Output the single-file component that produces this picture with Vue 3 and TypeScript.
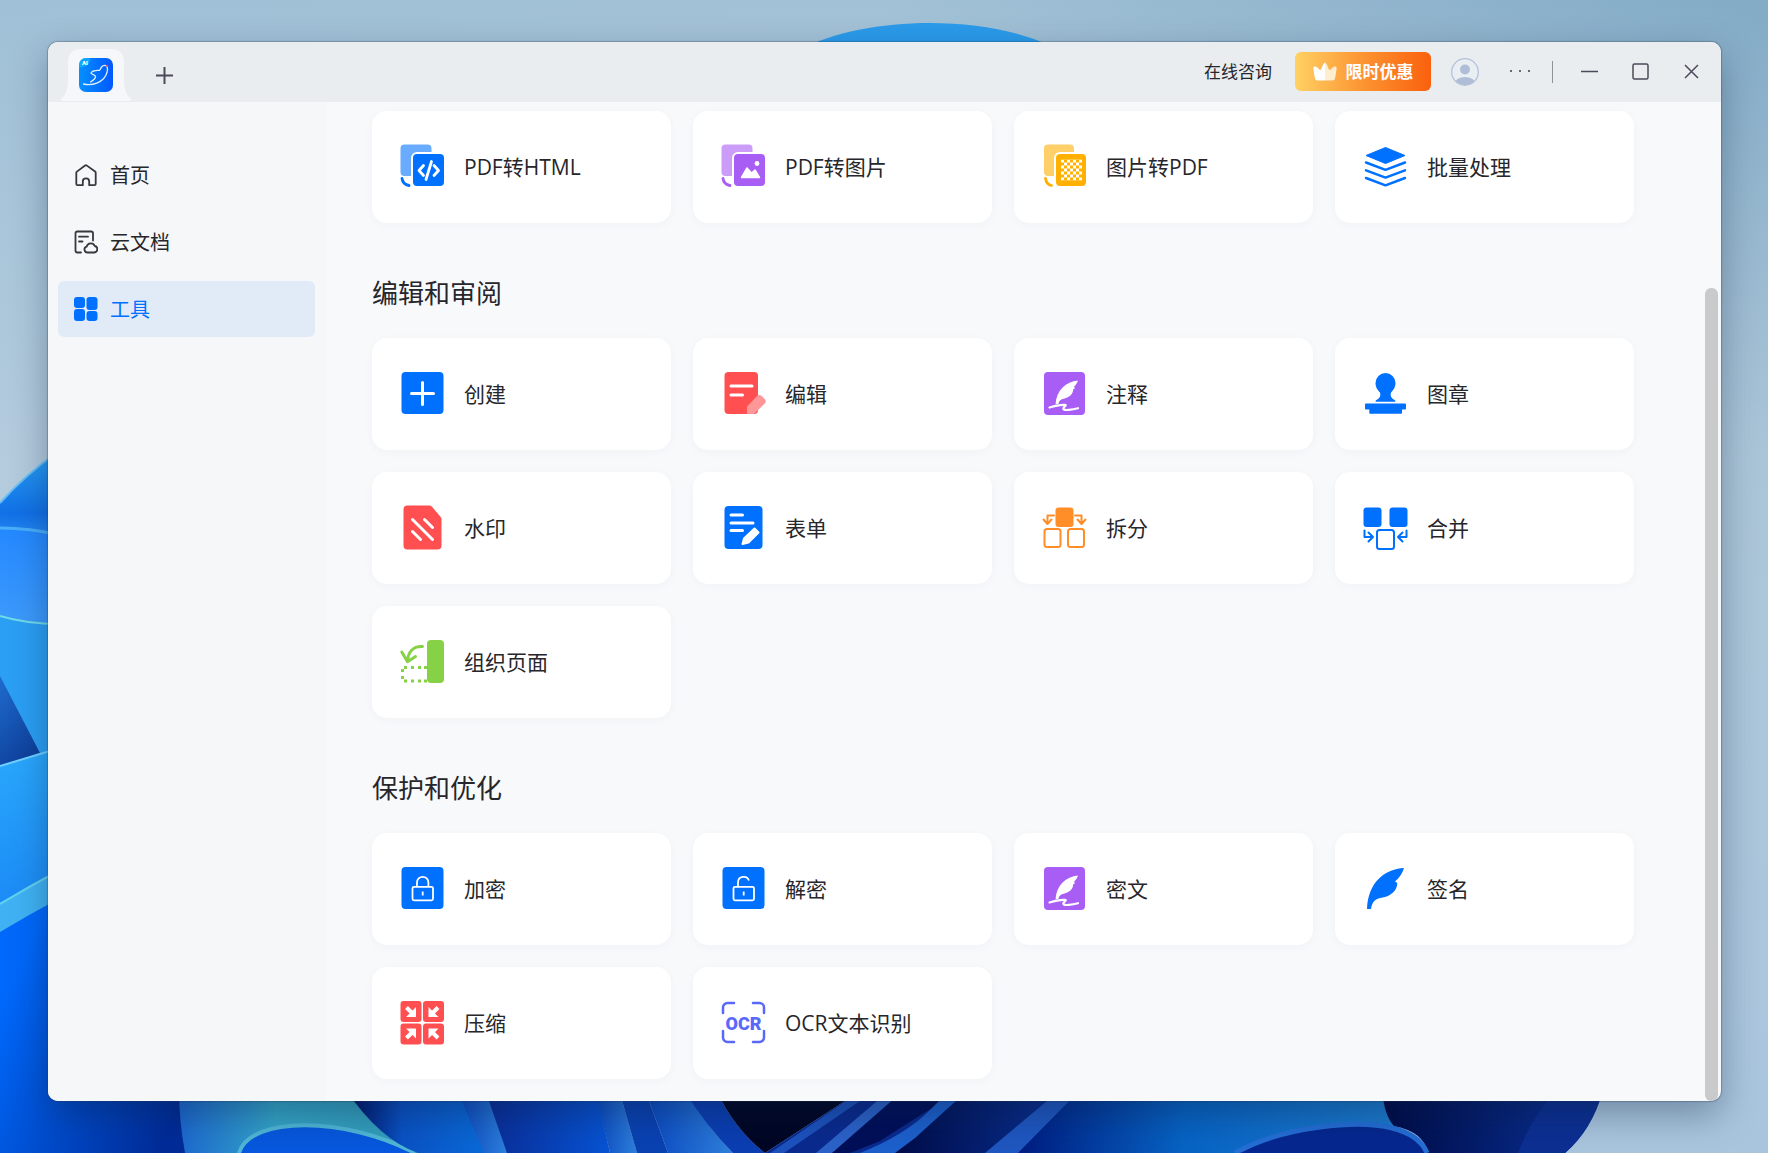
<script setup lang="ts">
import { ref } from 'vue'

interface Tool {
  label: string
  icon: string
}

interface Section {
  title?: string
  tools: Tool[]
}

const feather =
  '<rect x="2" y="0" width="41" height="43" rx="4" fill="#a85df5"/>' +
  '<path d="M36 8.500C24 9.500 14.500 18 13.500 32.500l2.800-.6c.8-3.200 2.700-4.700 5.500-5.200 6-1.200 9.400-5 9.400-9.400l1.800-1-1-1.500c2-2 3.400-4.200 4-6.300z" fill="#fff"/>' +
  '<path d="M7.500 35.500c5-1.600 11.500-3 15.500-2.600 2.500.4-1.800 2-1.700 3.700.2 2.600 9.700 1 14.700-.4" fill="none" stroke="#fff" stroke-width="2.200" stroke-linecap="round"/>'

const lockBase =
  '<rect x="1.500" y="0" width="42" height="42" rx="4" fill="#0070ff"/>' +
  '<g fill="none" stroke="#fff" stroke-width="1.800"><rect x="12.500" y="19.800" width="20.500" height="13.500" rx="1.500"/>'

const pages = (back: string, front: string, inner: string): string =>
  `<rect x=".5" y="-.5" width="31" height="31.500" rx="4" fill="${back}"/>` +
  `<path d="M2 33.500c.5 3.500 3 6.300 7 7" fill="none" stroke="${front}" stroke-width="2.800" stroke-linecap="round"/>` +
  `<rect x="12" y="8" width="33" height="34" rx="5" fill="${front}" stroke="#fff" stroke-width="2"/>${inner}`

const icons: Record<string, string> = {
  html: pages('#69abff', '#0070ff',
    '<path d="M23.500 20.500l-4.500 5 4.500 5M34 20.500l4.500 5-4.500 5M31.500 16.500l-5.500 18" fill="none" stroke="#fff" stroke-width="2.800" stroke-linecap="round" stroke-linejoin="round"/>'),
  image: pages('#cb9df9', '#a85df5',
    '<circle cx="36" cy="18.500" r="2.400" fill="#fff"/><path d="M20.500 32.500l5.500-9.500 4.500 5 3.500-3 4.500 7.500z" fill="#fff" stroke="#fff" stroke-width="1.500" stroke-linejoin="round"/>'),
  toPdf:
    '<defs><pattern id="checks" x="19" y="14.500" width="6" height="6" patternUnits="userSpaceOnUse"><path d="M0 0h3v3H0zM3 3h3v3H3z" fill="#fff"/></pattern></defs>' +
    '<rect x="2" y="-.5" width="30" height="31.500" rx="4" fill="#ffd069"/>' +
    '<path d="M3.500 33.500c.5 3.500 2.500 6.300 6 7" fill="none" stroke="#ffb000" stroke-width="2.800" stroke-linecap="round"/>' +
    '<rect x="13" y="8" width="32" height="34" rx="5" fill="#ffb000" stroke="#fff" stroke-width="2"/><rect x="19" y="14.500" width="21" height="21" fill="url(#checks)"/>',
  layers:
    '<path d="M22.500 2.500L42 10.500 22.500 18.500 3 10.500z" fill="#0070ff" stroke="#0070ff" stroke-linejoin="round"/>' +
    '<path d="M3 17.500l19.500 7.300L42 17.500M3 25.300l19.500 7.300L42 25.300M3 33l19.500 7.300L42 33" fill="none" stroke="#0070ff" stroke-width="2.500" stroke-linecap="round" stroke-linejoin="round"/>',
  create:
    '<rect x="1.500" y="0" width="42" height="42" rx="4" fill="#0070ff"/><path d="M22.500 10.500v22M11.500 21.500h22" stroke="#fff" stroke-width="3" stroke-linecap="round"/>',
  edit:
    '<rect x="3.500" y="0" width="33.500" height="42" rx="4" fill="#ff4f51"/>' +
    '<path d="M10 14h21M10 23h11.500" stroke="#fff" stroke-width="3" stroke-linecap="round"/>' +
    '<path d="M26 34.500L36 24c1.500-1.500 3.200-1.500 4.700 0l3 3c1.500 1.500 1.300 3 0 4.500L33 42h-7z" fill="#ff9698"/>',
  annotate: feather,
  stamp:
    '<path d="M22.500 1a10 10 0 0 1 10 10c0 4.500-2.500 7.500-4.500 9.500-1 3 0 5.500 3.500 7.500.8.400 1 1.300 1 1.800H12.500c0-.6.200-1.400 1-1.800 3.500-2 4.500-4.500 3.500-7.500-2-2-4.500-5-4.500-9.500a10 10 0 0 1 10-10z" fill="#0070ff"/>' +
    '<path d="M3 31.500h39a1 1 0 0 1 1 1v4a1 1 0 0 1-1 1h-3V41a.7.700 0 0 1-.7.700H7a.7.700 0 0 1-.7-.7v-3.500H3a1 1 0 0 1-1-1v-4a1 1 0 0 1 1-1z" fill="#0070ff"/>',
  watermark:
    '<path d="M7.500-.5H29a4 4 0 0 1 3 1.300l8.500 10a4 4 0 0 1 1 2.700v26a4 4 0 0 1-4 4h-30a4 4 0 0 1-4-4v-36a4 4 0 0 1 4-4z" fill="#ff4f51"/>' +
    '<path d="M12.500 13.500l20 20M24.500 13.500l8 8M12.500 25.500l8 8" stroke="#fff" stroke-width="3" stroke-linecap="round"/>',
  form:
    '<rect x="3.500" y="0" width="38" height="43" rx="4" fill="#0070ff"/>' +
    '<path d="M10 9h11.500M10 17h22M10 24.500h11.500" stroke="#fff" stroke-width="3" stroke-linecap="round"/>' +
    '<path d="M33.500 22.500l4 4-10 10-6 1.500 1.500-5.500z" fill="#fff" stroke="#fff" stroke-width="2" stroke-linejoin="round"/>',
  split:
    '<rect x="13.500" y="1.500" width="18" height="19.500" rx="3" fill="#ff8e29"/>' +
    '<g fill="none" stroke="#ff8e29" stroke-width="2"><rect x="2.500" y="23" width="16" height="18" rx="2.500"/><rect x="26" y="23" width="16" height="18" rx="2.500"/>' +
    '<path d="M12 9.500H5.500V17M1.500 13.500l4 4.500 4-4.500M33 9.500h6.500V17M35.500 13.500l4 4.500 4-4.500" stroke-linecap="round" stroke-linejoin="round"/></g>',
  merge:
    '<rect x=".5" y="1.500" width="18" height="19.500" rx="3" fill="#0070ff"/><rect x="26.500" y="1.500" width="18" height="19.500" rx="3" fill="#0070ff"/>' +
    '<g fill="none" stroke="#0070ff" stroke-width="2"><rect x="14" y="24" width="17" height="19" rx="2.500"/>' +
    '<path d="M1.500 24.500V31H10M5.500 26.500l4.500 4.500-4.500 4.500M43.500 24.500V31H35M39.500 26.500L35 31l4.500 4.500" stroke-linecap="round" stroke-linejoin="round"/></g>',
  organize:
    '<rect x="27" y="0" width="17" height="43" rx="4" fill="#87d147"/>' +
    '<path d="M22.500 6.500C13 6 8 12 7.500 21.500M1.800 12l5.700 9.800 8-5.300" fill="none" stroke="#87d147" stroke-width="3" stroke-linecap="round" stroke-linejoin="round"/>' +
    '<path d="M4 26h3v3H4zM11 26h3v3h-3zM18 26h3v3h-3zM24 26h3v3h-3zM1 29h3v3H1zM1 36h3v3H1zM4 39.500h3v3H4zM11 39.500h3v3h-3zM18 39.500h3v3h-3zM24 39.500h3v3h-3z" fill="#87d147"/>',
  lock: lockBase + '<path d="M17 19.500v-4a5.700 5.700 0 0 1 11.400 0v4M22.700 24.500v4"/></g>',
  unlock: lockBase + '<path d="M17 19.500v-4a5.700 5.700 0 0 1 11-2M22.700 24.500v4"/></g>',
  redact: feather,
  sign:
    '<path d="M41 1C21 2 5 16 4 42h4c.8-6.500 4-10.600 10.500-11.300C28 29.500 34.500 23 34.300 16l-2.300-1.500C36.500 11 39.500 6 41 1z" fill="#0070ff"/>',
  compress:
    '<path d="M3.500 0h15a3 3 0 0 1 3 3v15a3 3 0 0 1-3 3h-15a3 3 0 0 1-3-3V3a3 3 0 0 1 3-3zM26 0h15a3 3 0 0 1 3 3v15a3 3 0 0 1-3 3H26a3 3 0 0 1-3-3V3a3 3 0 0 1 3-3zM3.500 22.500h15a3 3 0 0 1 3 3v15a3 3 0 0 1-3 3h-15a3 3 0 0 1-3-3v-15a3 3 0 0 1 3-3zM26 22.500h15a3 3 0 0 1 3 3v15a3 3 0 0 1-3 3H26a3 3 0 0 1-3-3v-15a3 3 0 0 1 3-3z" fill="#ff4f51"/>' +
    '<path d="M6.500 6.500L12 12M38 6.500L32.500 12M6.500 37l5.500-5.500M38 37l-5.500-5.500" stroke="#fff" stroke-width="4"/>' +
    '<path d="M16 6v10H6zM28.500 6v10h10zM16 37.500v-10H6zM28.500 37.500v-10h10z" fill="#fff"/>',
  ocr:
    '<path d="M2 12V6.500a4.500 4.500 0 0 1 4.500-4.500H13M32 2h6.500A4.500 4.500 0 0 1 43 6.500V12M43 30v6.500a4.500 4.500 0 0 1-4.500 4.500H32M13 41H6.500A4.500 4.500 0 0 1 2 36.500V30" fill="none" stroke="#5a68fa" stroke-width="2.500" stroke-linecap="round"/>' +
    '<text x="22.500" y="28.500" text-anchor="middle" font-family="Roboto, sans-serif" font-weight="900" font-size="18" fill="#5a68fa">OCR</text>',
  home:
    '<path d="M2.300 9.800a1.500 1.500 0 0 1 .6-1.200l8.200-6a1.500 1.500 0 0 1 1.800 0l8.200 6a1.500 1.500 0 0 1 .6 1.200V21a1.200 1.200 0 0 1-1.200 1.200h-5.300V18.500a3.200 3.200 0 0 0-6.400 0v3.700H3.500A1.200 1.200 0 0 1 2.300 21z" fill="none" stroke="#37373d" stroke-width="1.800" stroke-linejoin="round"/>',
  cloudDoc:
    '<g fill="none" stroke="#37373d" stroke-width="1.800" stroke-linecap="round" stroke-linejoin="round"><path d="M19 10.500V3.200A1.700 1.700 0 0 0 17.300 1.500H3.200a1.700 1.700 0 0 0-1.700 1.700v17.600a1.700 1.700 0 0 0 1.700 1.700H7M5 6.700h9M5 11.500h3.500"/>' +
    '<path d="M13.500 22.500a3 3 0 0 1-.8-5.900 4.200 4.200 0 0 1 8-.6 3.300 3.300 0 0 1-.2 6.500z"/></g>',
  grid:
    '<rect x="0" y="0" width="11" height="11" rx="3" fill="#0070ff"/><rect x="12.500" y="0" width="11" height="13" rx="3" fill="#0070ff"/><rect x="0" y="12" width="11" height="12" rx="3" fill="#0070ff"/><rect x="12.500" y="14" width="11" height="10" rx="3" fill="#0070ff"/>',
}

const navItems = [
  { id: 'home', label: '首页', icon: 'home' },
  { id: 'cloud', label: '云文档', icon: 'cloudDoc' },
  { id: 'tools', label: '工具', icon: 'grid' },
]
const active = ref('tools')

const sections: Section[] = [
  {
    tools: [
      { label: 'PDF转HTML', icon: 'html' },
      { label: 'PDF转图片', icon: 'image' },
      { label: '图片转PDF', icon: 'toPdf' },
      { label: '批量处理', icon: 'layers' },
    ],
  },
  {
    title: '编辑和审阅',
    tools: [
      { label: '创建', icon: 'create' },
      { label: '编辑', icon: 'edit' },
      { label: '注释', icon: 'annotate' },
      { label: '图章', icon: 'stamp' },
      { label: '水印', icon: 'watermark' },
      { label: '表单', icon: 'form' },
      { label: '拆分', icon: 'split' },
      { label: '合并', icon: 'merge' },
      { label: '组织页面', icon: 'organize' },
    ],
  },
  {
    title: '保护和优化',
    tools: [
      { label: '加密', icon: 'lock' },
      { label: '解密', icon: 'unlock' },
      { label: '密文', icon: 'redact' },
      { label: '签名', icon: 'sign' },
      { label: '压缩', icon: 'compress' },
      { label: 'OCR文本识别', icon: 'ocr' },
    ],
  },
]
</script>

<template>
  <div class="desktop">
    <!-- Desktop wallpaper -->
    <svg class="wallpaper" viewBox="0 0 1768 1153" preserveAspectRatio="none" aria-hidden="true">
      <defs>
        <linearGradient id="sky" x1="0" y1="0" x2="1" y2="0">
          <stop offset="0" stop-color="#9fc0d6" />
          <stop offset=".5" stop-color="#a2c1d6" />
          <stop offset="1" stop-color="#83abc6" />
        </linearGradient>
        <linearGradient id="haze" x1="0" y1="0" x2="0" y2="1">
          <stop offset="0" stop-color="#bcd0e0" stop-opacity="0" />
          <stop offset=".4" stop-color="#bcd0e0" stop-opacity=".7" />
          <stop offset="1" stop-color="#a9c5de" />
        </linearGradient>
        <linearGradient id="bloomA" x1="0" y1="0" x2="0" y2="1">
          <stop offset="0" stop-color="#2aa2f4" />
          <stop offset=".7" stop-color="#1170e6" />
          <stop offset="1" stop-color="#2a8cf4" />
        </linearGradient>
        <linearGradient id="bloomB" x1="0" y1="0" x2="0" y2="1">
          <stop offset="0" stop-color="#2488ff" />
          <stop offset="1" stop-color="#3f9cfb" />
        </linearGradient>
        <linearGradient id="bloomC" x1="0" y1="0" x2="0" y2="1">
          <stop offset="0" stop-color="#2aa8fc" />
          <stop offset="1" stop-color="#1b8af6" />
        </linearGradient>
        <linearGradient id="cave" x1="0" y1="0" x2=".4" y2="1">
          <stop offset="0" stop-color="#1f6ccd" />
          <stop offset="1" stop-color="#0f429e" />
        </linearGradient>
        <linearGradient id="deep" gradientUnits="userSpaceOnUse" x1="0" y1="1010" x2="185" y2="1090">
          <stop offset="0" stop-color="#0068fa" />
          <stop offset="1" stop-color="#002c98" />
        </linearGradient>
        <linearGradient id="teal" x1="0" y1="0" x2="1" y2="0">
          <stop offset="0" stop-color="#1c68cf" />
          <stop offset=".4" stop-color="#35a6c8" />
          <stop offset="1" stop-color="#329ab6" />
        </linearGradient>
        <linearGradient id="fold" x1="0" y1="0" x2="1" y2="0">
          <stop offset="0" stop-color="#000d5c" />
          <stop offset=".4" stop-color="#0a52c4" />
          <stop offset="1" stop-color="#0a6ad8" />
        </linearGradient>
        <linearGradient id="night" x1="0" y1="0" x2="1" y2="0">
          <stop offset="0" stop-color="#0a2c96" />
          <stop offset="1" stop-color="#0754d4" />
        </linearGradient>
        <linearGradient id="stripe" x1="0" y1="0" x2="1" y2="0">
          <stop offset="0" stop-color="#0a48c0" />
          <stop offset="1" stop-color="#2e80dc" />
        </linearGradient>
        <linearGradient id="swell" x1="0" y1="0" x2="1" y2="0">
          <stop offset="0" stop-color="#001c80" />
          <stop offset=".4" stop-color="#0763c4" />
          <stop offset="1" stop-color="#2080d0" />
        </linearGradient>
        <linearGradient id="edge" x1="0" y1="0" x2="1" y2="0">
          <stop offset="0" stop-color="#000b46" />
          <stop offset="1" stop-color="#0a349c" />
        </linearGradient>
      </defs>
      <rect width="1768" height="1153" fill="url(#sky)" />
      <rect width="1768" height="1153" fill="url(#haze)" />
      <path d="M800 50C865 14 995 14 1058 50z" fill="#2b9bea" />
      <!-- Petals left of the window -->
      <path d="M0 503Q24 476 60 450V540H0z" fill="url(#bloomA)" />
      <path d="M0 503Q24 476 60 450" fill="none" stroke="#63bdf5" stroke-width="2" />
      <path d="M0 528Q30 528 60 535V630H0z" fill="url(#bloomB)" />
      <path d="M0 528Q30 528 60 535" fill="none" stroke="#4aaefa" stroke-width="3" />
      <path d="M0 616Q26 624 60 624V770H0z" fill="#2b9ff4" />
      <path d="M0 616Q26 624 60 624" fill="none" stroke="#71dce8" stroke-width="2" />
      <path d="M0 676L40 753 0 766z" fill="url(#cave)" />
      <path d="M0 766L60 748V880L0 910z" fill="url(#bloomC)" />
      <path d="M0 766L60 748" stroke="#6fd0ff" stroke-width="2" />
      <path d="M0 904Q30 886 60 870V945H0z" fill="#40b2f4" />
      <path d="M0 904Q30 886 60 870" fill="none" stroke="#62d2ee" stroke-width="2" />
      <!-- Petals below the window -->
      <path d="M0 932Q30 914 60 898V1080H220V1153H0z" fill="url(#deep)" />
      <path d="M179 1090H350L420 1153H185Q179 1120 179 1090z" fill="url(#teal)" />
      <path d="M239 1153C250 1116 345 1116 415 1153z" fill="#0758de" />
      <path d="M239 1153C250 1116 345 1116 415 1153" fill="none" stroke="#50b7d6" stroke-width="4" />
      <path d="M346 1090H458L486 1153H418Q380 1140 346 1090z" fill="url(#fold)" />
      <path d="M457 1090H485L508 1153H484z" fill="url(#stripe)" />
      <path d="M485 1090H596L610 1153H507z" fill="url(#night)" />
      <path d="M595 1090H619L637 1153H610z" fill="url(#stripe)" />
      <path d="M619 1090H645L668 1153H637z" fill="#0a42b2" />
      <path d="M645 1090H685Q705 1125 733 1153H668z" fill="url(#stripe)" />
      <path d="M684 1090H716Q735 1130 765 1153H733Q705 1125 684 1090z" fill="#0b3eb2" />
      <path d="M716 1090H862L765 1153Q735 1130 716 1090z" fill="#000624" />
      <path d="M862 1090H980L900 1153H765z" fill="#0a2a8e" />
      <path d="M862 1090H876L784 1153H770z" fill="#1d52bd" />
      <path d="M890 1090H960L880 1141 850 1153H822z" fill="#000f58" />
      <path d="M890 1090H904L832 1153H816z" fill="#2c62c8" />
      <path d="M965 1090H1080L1018 1153H890z" fill="url(#edge)" />
      <path d="M968 1090L915 1138 895 1153H860Q905 1135 930 1110L950 1090z" fill="#1d60cc" />
      <path d="M1060 1090H1082L1020 1153H985z" fill="#1f57c0" />
      <path d="M1080 1090H1382Q1384 1118 1400 1128L1430 1153H1018z" fill="url(#swell)" />
      <path d="M1382 1090H1603Q1592 1130 1565 1153H1428Q1424 1132 1394 1126 1384 1115 1382 1090z" fill="url(#edge)" />
      <path d="M1556 1090H1603Q1592 1130 1565 1153H1518Q1530 1120 1556 1090z" fill="#0c2f92" />
      <path d="M1238 1153C1288 1125 1360 1122 1392 1128Q1420 1135 1428 1153z" fill="#06278f" />
      <path d="M1235 1153C1285 1125 1360 1120 1392 1128Q1420 1135 1427 1153" fill="none" stroke="#246ed5" stroke-width="5" />
    </svg>

    <main class="window">
      <header class="titlebar">
        <div class="tabs">
          <button class="tab" type="button" aria-label="主页标签">
            <svg class="tab-shape" viewBox="0 0 70 52" aria-hidden="true">
              <path d="M0 52v-2q7-6 7-18V13Q7 0 21 0h28q14 0 14 13v19q0 12 7 18v2z" fill="#f5f7f9" />
            </svg>
            <svg class="logo" viewBox="0 0 34 34" aria-hidden="true">
              <defs>
                <linearGradient id="brand" x1="0" y1="0" x2="1" y2="0">
                  <stop offset="0" stop-color="#0590ff" />
                  <stop offset="1" stop-color="#0058ff" />
                </linearGradient>
              </defs>
              <rect width="34" height="34" rx="7" fill="url(#brand)" />
              <path d="M0 10V7a7 7 0 0 1 7-7h4q1 7-7 9z" fill="#14b4ff" opacity=".7" />
              <text x="3" y="7" font-family="Roboto, sans-serif" font-weight="900" font-size="6" fill="#fff">AI</text>
              <path d="M4.500 26c9 2 19-1.500 22.500-9 1.800-4 1.800-7 .8-9-1.500-.8-4-.5-5.300 1-.9 1-.8 2.500-2 3.300-2.500.3-7-.3-8.500 2.700 1 1.800 4.500 1.500 4.500 3.500 0 2.500-2.500 4-5 5.500" fill="none" stroke="#dff0ff" stroke-width="1.300" stroke-linecap="round" />
              <path d="M27 7.500l2 .7" stroke="#f2495f" stroke-width="1.500" />
            </svg>
          </button>
          <button class="icon-button add" type="button" aria-label="新建标签">
            <svg width="17" height="17" viewBox="0 0 17 17"><path d="M8.500 0v17M0 8.500h17" stroke="#4b4a58" stroke-width="2" /></svg>
          </button>
        </div>

        <div class="actions">
          <a class="consult" href="#consult">在线咨询</a>
          <button class="promo" type="button">
            <svg width="24" height="20" viewBox="0 0 24 20" aria-hidden="true">
              <path d="M12 .5c1.200 0 2.700 4 3.900 6.800.4.900 1 1 1.600.4C19 6 20.500 4.200 22.500 4.500c1.600.3 1.100 2.500.5 6.500l-1 5.500a2.500 2.500 0 0 1-2.500 2H12z" fill="#ffedcf" />
              <path d="M12 .5c-1.200 0-2.700 4-3.900 6.800-.4.900-1 1-1.600.4C5 6 3.500 4.200 1.500 4.500-.1 4.800.4 7 1 11l1 5.500a2.500 2.500 0 0 0 2.500 2H12z" fill="#fff" />
            </svg>
            <span>限时优惠</span>
          </button>
          <button class="icon-button avatar" type="button" aria-label="账户">
            <svg width="28" height="28" viewBox="0 0 28 28">
              <clipPath id="face"><circle cx="14" cy="14" r="13" /></clipPath>
              <circle cx="14" cy="14" r="13.300" fill="#e9eef3" stroke="#b4c0da" stroke-width="1.300" />
              <g clip-path="url(#face)" fill="#b0bdd6"><circle cx="14" cy="11.500" r="5" /><ellipse cx="14" cy="26" rx="10.500" ry="7" /></g>
            </svg>
          </button>
          <button class="icon-button more" type="button" aria-label="更多">
            <svg width="20" height="3" viewBox="0 0 20 3"><path d="M0 0h2v2H0zM9 0h2v2H9zM18 0h2v2h-2z" fill="#686873" /></svg>
          </button>
          <span class="divider"></span>
          <div class="controls">
            <button class="icon-button" type="button" aria-label="最小化">
              <svg width="17" height="17" viewBox="0 0 17 17"><path d="M0 8.500h17" stroke="#4b4a58" stroke-width="1.500" /></svg>
            </button>
            <button class="icon-button" type="button" aria-label="最大化">
              <svg width="17" height="17" viewBox="0 0 17 17"><rect x="1" y="1" width="15" height="15" rx="1.500" fill="none" stroke="#4b4a58" stroke-width="1.500" /></svg>
            </button>
            <button class="icon-button" type="button" aria-label="关闭">
              <svg width="17" height="17" viewBox="0 0 17 17"><path d="M2 2l13 13M15 2L2 15" stroke="#4b4a58" stroke-width="1.500" /></svg>
            </button>
          </div>
        </div>
      </header>

      <div class="body">
        <nav class="sidebar">
          <a
            v-for="item in navItems"
            :key="item.id"
            :href="`#${item.id}`"
            class="nav-item"
            :class="{ active: active === item.id }"
            @click.prevent="active = item.id"
          >
            <svg width="24" height="24" viewBox="0 0 24 24" aria-hidden="true" v-html="icons[item.icon]"></svg>
            <span>{{ item.label }}</span>
          </a>
        </nav>

        <div class="content">
          <section v-for="(section, i) in sections" :key="i">
            <h2 v-if="section.title" class="section-title">{{ section.title }}</h2>
            <div class="cards">
              <button v-for="tool in section.tools" :key="tool.label" class="card" type="button">
                <svg class="card-icon" viewBox="0 0 44 44" aria-hidden="true" v-html="icons[tool.icon]"></svg>
                <span>{{ tool.label }}</span>
              </button>
            </div>
          </section>
        </div>

        <div class="scroll-track"><div class="scroll-thumb"></div></div>
      </div>
    </main>
  </div>
</template>

<style>
body {
  margin: 0;
}
</style>

<style scoped>
.desktop {
  position: relative;
  isolation: isolate;
  box-sizing: border-box;
  min-height: 100vh;
  padding: 42px 47px 52px 48px;
  overflow: hidden;
  font-family: 'Open Sans', 'Noto Sans CJK SC', sans-serif;
  color: #26262b;
}

.wallpaper {
  position: absolute;
  inset: 0;
  z-index: -1;
  width: 100%;
  height: 100%;
}

.window {
  overflow: hidden;
  border-radius: 10px;
  background: #f8f9fb;
  box-shadow: 0 0 1px 1px rgba(40, 60, 80, 0.3), 0 14px 36px rgba(10, 30, 60, 0.35);
}

button {
  margin: 0;
  padding: 0;
  border: 0;
  background: none;
  color: inherit;
  font: inherit;
  cursor: pointer;
}

a {
  color: inherit;
  text-decoration: none;
}

.titlebar {
  display: flex;
  justify-content: space-between;
  height: 60px;
  background: #e9edf0;
}

.tabs {
  display: flex;
  align-items: flex-end;
  gap: 12px;
  padding: 0 0 1px 13px;
}

.tab {
  position: relative;
  display: flex;
  align-items: center;
  justify-content: center;
  width: 70px;
  height: 52px;
}

.tab-shape {
  position: absolute;
  inset: 0;
  z-index: 0;
}

.logo {
  position: relative;
  width: 34px;
  height: 34px;
}

.icon-button {
  display: flex;
  align-items: center;
  justify-content: center;
}

.add {
  width: 43px;
  height: 52px;
}

.actions {
  display: flex;
  align-items: center;
  padding: 0 4px 1px 0;
}

.consult {
  margin-right: 23px;
  font-size: 17px;
  line-height: 24px;
}

.promo {
  display: flex;
  align-items: center;
  justify-content: center;
  gap: 9px;
  width: 136px;
  height: 39px;
  margin-right: 20px;
  border-radius: 6px;
  background: linear-gradient(90deg, #ffd163, #fc9432 50%, #fa600d);
  color: #fff;
  font-size: 17px;
  font-weight: 700;
  line-height: 24px;
}

.more {
  width: 41px;
  height: 40px;
  margin: 0 12px 0 20px;
}

.divider {
  width: 1px;
  height: 22px;
  margin-right: 11px;
  background: #8f9297;
}

.controls {
  display: flex;
}

.controls .icon-button {
  width: 51px;
  height: 40px;
}

.body {
  display: flex;
}

.sidebar {
  display: flex;
  flex: 0 0 257px;
  flex-direction: column;
  gap: 11px;
  padding: 45px 11px 0 10px;
  background: #f5f7f9;
}

.nav-item {
  display: flex;
  align-items: center;
  gap: 12px;
  height: 56px;
  padding-left: 16px;
  border-radius: 6px;
  font-size: 20px;
  line-height: 28px;
}

.nav-item span {
  padding-top: 2px;
}

.nav-item.active {
  background: #e1ebf8;
  color: #0070ff;
}

.content {
  flex: 1;
  min-width: 0;
  padding: 9px 71px 22px 46px;
}

.section-title {
  margin: 0;
  padding: 52px 0 27px;
  font-size: 26px;
  font-weight: 400;
  line-height: 36px;
}

.cards {
  display: grid;
  grid-template-columns: repeat(4, minmax(0, 1fr));
  gap: 22px;
}

.card {
  display: flex;
  align-items: center;
  gap: 20px;
  height: 112px;
  padding: 0 28px;
  border-radius: 15px;
  background: #fff;
  box-shadow: 0 2px 10px rgba(40, 60, 90, 0.035);
  font-size: 21px;
  line-height: 30px;
  white-space: nowrap;
}

.card-icon {
  flex: none;
  width: 44px;
  height: 44px;
  overflow: visible;
}

.scroll-track {
  display: flex;
  flex: 0 0 13px;
  flex-direction: column;
  justify-content: flex-end;
  padding-right: 3px;
}

.scroll-thumb {
  height: 81.4%;
  border-radius: 6px;
  background: #c9cacb;
}
</style>
